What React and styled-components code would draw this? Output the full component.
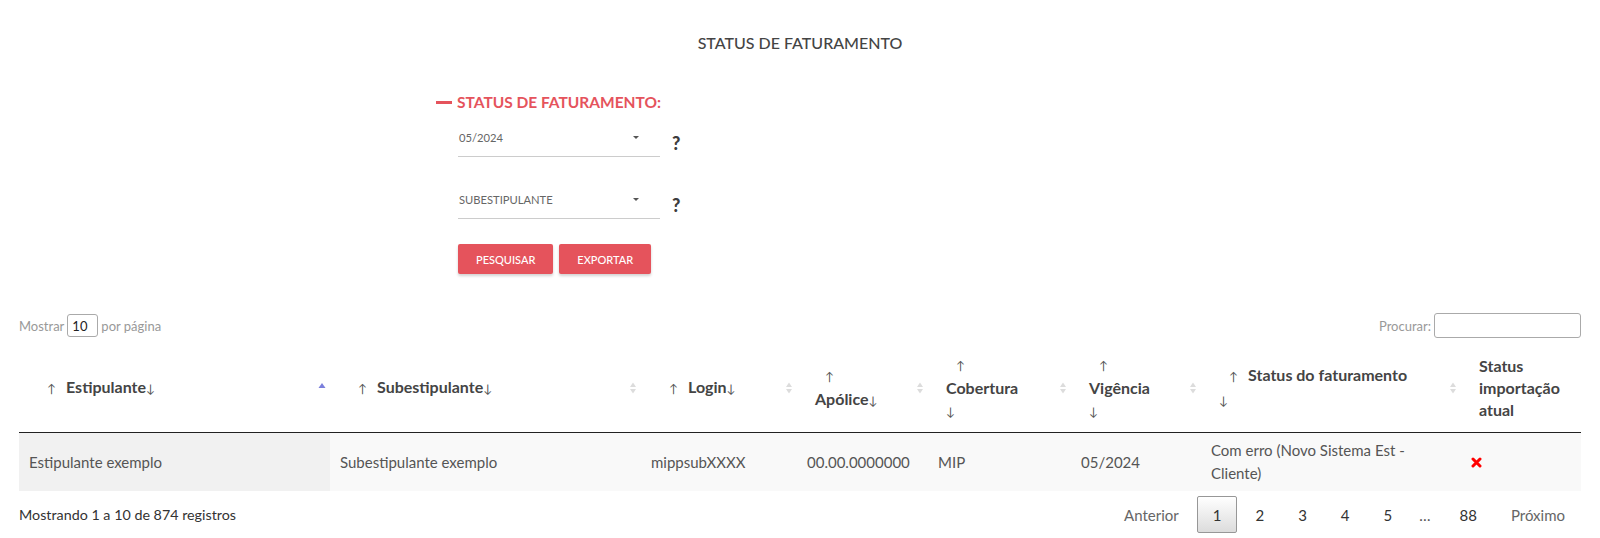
import React from "react";
import styled, { createGlobalStyle } from "styled-components";

const Global = createGlobalStyle`
  html, body { margin: 0; padding: 0; background: #fff; }
  body { font-family: Lato, "Open Sans", Arial, sans-serif; color: #444; }
  * { box-sizing: border-box; }
`;

const RED = "#e5535c";

const Page = styled.div`
  padding: 0 19px;
`;

const Title = styled.h1`
  margin: 0;
  padding-top: 33px;
  text-align: center;
  font-size: 16px;
  line-height: 20px;
  font-weight: 500;
  color: #444;
`;

const Section = styled.section`
  margin: 39px 0 0 417px;
`;

const SectionTitle = styled.h2`
  margin: 0;
  display: flex;
  align-items: center;
  gap: 5px;
  font-size: 15.5px;
  line-height: 20px;
  font-weight: 700;
  color: ${RED};
`;

const Dash = styled.span`
  display: inline-block;
  width: 16px;
  height: 3px;
  background: ${RED};
`;

const FormBody = styled.div`
  padding-left: 22px;
`;

const FieldRow = styled.div`
  display: flex;
  align-items: center;
  margin-top: ${(p) => p.$top}px;
`;

const SelectBox = styled.div`
  width: 202px;
  height: 29px;
  padding: 3px 21px 0 1px;
  border-bottom: 1px solid #ccc;
  display: flex;
  align-items: flex-start;
  justify-content: space-between;
  font-size: 11.2px;
  line-height: 14px;
  color: #666;
`;

const Caret = styled.span`
  width: 0;
  height: 0;
  margin-top: 5px;
  border-left: 3.5px solid transparent;
  border-right: 3.5px solid transparent;
  border-top: 3.5px solid #555;
`;

const Help = styled.span`
  margin-left: 12px;
  font-size: 18px;
  font-weight: 900;
  color: #3d3d3d;
  line-height: 20px;
  padding-top: 1px;
`;

const ButtonRow = styled.div`
  display: flex;
  gap: 6px;
  margin-top: 25px;
`;

const Button = styled.button`
  height: 30px;
  padding: 0 ${(p) => p.$px}px;
  border: none;
  border-radius: 2px;
  background: ${RED};
  color: #fff;
  font-family: Lato, Arial, sans-serif;
  font-size: 11px;
  font-weight: 500;
  box-shadow: 0 2px 3px rgba(0, 0, 0, 0.18);
  cursor: pointer;
`;

const Controls = styled.div`
  margin-top: 39px;
  display: flex;
  align-items: center;
  justify-content: space-between;
  height: 25px;
  font-size: 13px;
  color: #999;
`;

const ControlGroup = styled.label`
  display: flex;
  align-items: center;
  gap: 3px;
`;

const SmallInput = styled.input`
  width: ${(p) => p.$w}px;
  height: ${(p) => p.$h}px;
  border: 1px solid #aaa;
  border-radius: 3px;
  padding: 0 4px;
  font-family: Lato, Arial, sans-serif;
  font-size: 13px;
  color: #222;
  background: #fff;
`;

const Table = styled.table`
  width: 100%;
  margin-top: 12px;
  border-collapse: collapse;
  table-layout: fixed;
`;

const Th = styled.th`
  padding: 3px 4px 9px 18px;
  text-align: left;
  vertical-align: middle;
  border-bottom: 1px solid #222;
  font-size: 16px;
  font-weight: 700;
  color: #444;
`;

const HeadInner = styled.div`
  display: flex;
  align-items: center;
  justify-content: space-between;
  gap: 4px;
`;

const HeadText = styled.div`
  line-height: 22px;
`;

const HLine = styled.div`
  white-space: nowrap;
`;

const Arrow = styled.span`
  display: inline-block;
  font-size: 12px;
  font-weight: 400;
  color: #555;
  margin-left: ${(p) => p.$indent || 0}px;
  margin-right: ${(p) => p.$gap || 0}px;
`;

const Td = styled.td`
  padding: 6px 10px 6px;
  font-size: 15px;
  line-height: 23px;
  color: #555;
  background: ${(p) => (p.$sorted ? "#f1f1f1" : "#f9f9f9")};
  vertical-align: middle;
`;

const Footer = styled.div`
  margin-top: 5px;
  display: flex;
  align-items: center;
  justify-content: space-between;
`;

const Info = styled.div`
  font-size: 14.3px;
  color: #333;
`;

const Pager = styled.div`
  display: flex;
  align-items: center;
`;

const PageBtn = styled.span`
  margin-left: 2px;
  padding: 7.5px 15px;
  text-align: center;
  font-size: 15px;
  line-height: 20px;
  border: 1px solid ${(p) => (p.$current ? "#979797" : "transparent")};
  border-radius: 2px;
  color: ${(p) => (p.$muted ? "#666" : "#333")};
  background: ${(p) =>
    p.$current ? "linear-gradient(to bottom, #fff 0%, #dcdcdc 100%)" : "transparent"};
`;

const Ellipsis = styled.span`
  padding: 0 11px;
  font-size: 15px;
  color: #555;
`;

function SortIcon({ asc }) {
  return (
    <svg width="8" height="12" viewBox="0 0 8 12" style={{ flex: "none" }}>
      {asc ? (
        <path d="M4 1 L7.5 6 L0.5 6 Z" fill="#7b7fdc" />
      ) : (
        <>
          <path d="M4 0.5 L7 5 L1 5 Z" fill="#dcdcdc" />
          <path d="M1 7 L7 7 L4 11.5 Z" fill="#dcdcdc" />
        </>
      )}
    </svg>
  );
}

function ErrorX() {
  return (
    <svg width="11" height="11" viewBox="0 0 11 11">
      <path d="M2 2 L9 9 M9 2 L2 9" stroke="#f00" strokeWidth="3" strokeLinecap="round" />
    </svg>
  );
}

const Up = () => (
  <Arrow $indent={10} $gap={10}>
    ↑
  </Arrow>
);

export default function App() {
  return (
    <Page>
      <Global />
      <Title>STATUS DE FATURAMENTO</Title>
      <Section>
        <SectionTitle>
          <Dash />
          STATUS DE FATURAMENTO:
        </SectionTitle>
        <FormBody>
          <FieldRow $top={16}>
            <SelectBox>
              <span>05/2024</span>
              <Caret />
            </SelectBox>
            <Help>?</Help>
          </FieldRow>
          <FieldRow $top={33}>
            <SelectBox>
              <span>SUBESTIPULANTE</span>
              <Caret />
            </SelectBox>
            <Help>?</Help>
          </FieldRow>
          <ButtonRow>
            <Button $px={18}>PESQUISAR</Button>
            <Button $px={18}>EXPORTAR</Button>
          </ButtonRow>
        </FormBody>
      </Section>

      <Controls>
        <ControlGroup>
          Mostrar
          <SmallInput $w={31} $h={23} defaultValue="10" />
          por página
        </ControlGroup>
        <ControlGroup>
          Procurar:
          <SmallInput $w={147} $h={25} />
        </ControlGroup>
      </Controls>

      <Table>
        <colgroup>
          <col style={{ width: 311 }} />
          <col style={{ width: 311 }} />
          <col style={{ width: 156 }} />
          <col style={{ width: 131 }} />
          <col style={{ width: 143 }} />
          <col style={{ width: 130 }} />
          <col style={{ width: 260 }} />
          <col style={{ width: 120 }} />
        </colgroup>
        <thead>
          <tr>
            <Th>
              <HeadInner>
                <HeadText>
                  <HLine>
                    <Up />
                    Estipulante<Arrow>↓</Arrow>
                  </HLine>
                </HeadText>
                <SortIcon asc />
              </HeadInner>
            </Th>
            <Th>
              <HeadInner>
                <HeadText>
                  <HLine>
                    <Up />
                    Subestipulante<Arrow>↓</Arrow>
                  </HLine>
                </HeadText>
                <SortIcon />
              </HeadInner>
            </Th>
            <Th>
              <HeadInner>
                <HeadText>
                  <HLine>
                    <Up />
                    Login<Arrow>↓</Arrow>
                  </HLine>
                </HeadText>
                <SortIcon />
              </HeadInner>
            </Th>
            <Th>
              <HeadInner>
                <HeadText>
                  <HLine>
                    <Up />
                  </HLine>
                  <HLine>
                    Apólice<Arrow>↓</Arrow>
                  </HLine>
                </HeadText>
                <SortIcon />
              </HeadInner>
            </Th>
            <Th>
              <HeadInner>
                <HeadText>
                  <HLine>
                    <Up />
                  </HLine>
                  <HLine>Cobertura</HLine>
                  <HLine>
                    <Arrow>↓</Arrow>
                  </HLine>
                </HeadText>
                <SortIcon />
              </HeadInner>
            </Th>
            <Th>
              <HeadInner>
                <HeadText>
                  <HLine>
                    <Up />
                  </HLine>
                  <HLine>Vigência</HLine>
                  <HLine>
                    <Arrow>↓</Arrow>
                  </HLine>
                </HeadText>
                <SortIcon />
              </HeadInner>
            </Th>
            <Th>
              <HeadInner>
                <HeadText>
                  <HLine>
                    <Up />
                    Status do faturamento
                  </HLine>
                  <HLine>
                    <Arrow>↓</Arrow>
                  </HLine>
                </HeadText>
                <SortIcon />
              </HeadInner>
            </Th>
            <Th>
              <HeadText>Status importação atual</HeadText>
            </Th>
          </tr>
        </thead>
        <tbody>
          <tr>
            <Td $sorted>Estipulante exemplo</Td>
            <Td>Subestipulante exemplo</Td>
            <Td>mippsubXXXX</Td>
            <Td>00.00.0000000</Td>
            <Td>MIP</Td>
            <Td>05/2024</Td>
            <Td>Com erro (Novo Sistema Est - Cliente)</Td>
            <Td>
              <ErrorX />
            </Td>
          </tr>
        </tbody>
      </Table>

      <Footer>
        <Info>Mostrando 1 a 10 de 874 registros</Info>
        <Pager>
          <PageBtn $muted>Anterior</PageBtn>
          <PageBtn $current>1</PageBtn>
          <PageBtn>2</PageBtn>
          <PageBtn>3</PageBtn>
          <PageBtn>4</PageBtn>
          <PageBtn>5</PageBtn>
          <Ellipsis>…</Ellipsis>
          <PageBtn>88</PageBtn>
          <PageBtn $muted>Próximo</PageBtn>
        </Pager>
      </Footer>
    </Page>
  );
}
